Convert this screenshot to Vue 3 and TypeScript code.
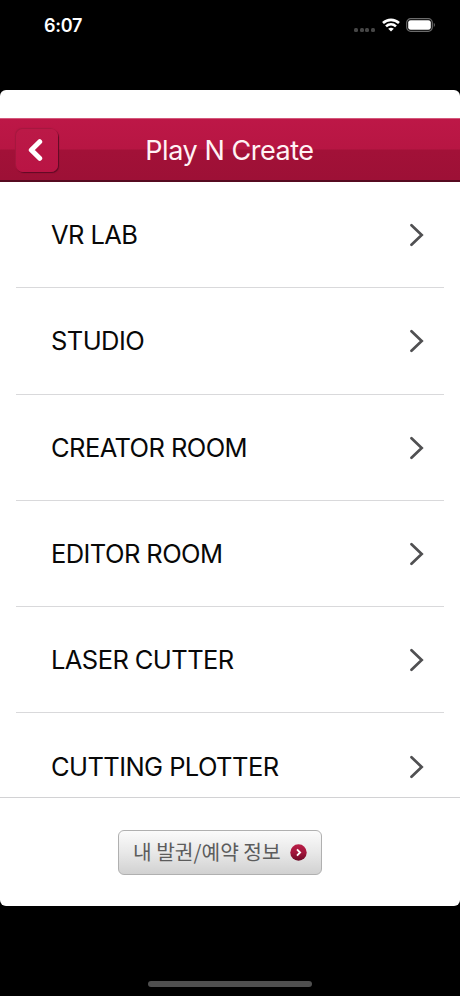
<script setup lang="ts">
interface Room {
  name: string
}

const rooms: Room[] = [
  { name: 'VR LAB' },
  { name: 'STUDIO' },
  { name: 'CREATOR ROOM' },
  { name: 'EDITOR ROOM' },
  { name: 'LASER CUTTER' },
  { name: 'CUTTING PLOTTER' },
]
</script>

<template>
  <div class="phone">
    <div class="status">
      <span class="time">6:07</span>
      <div class="indicators">
        <div class="cell"><i v-for="n in 4" :key="n"></i></div>
        <svg class="wifi" width="18" height="14" viewBox="0 0 18 14" fill="none" stroke="#fff" stroke-width="2.6">
          <path d="M1 5C5.500.8 12.500.8 17 5" />
          <path d="M4 8.400c2.900-2.700 7.100-2.700 10 0" />
          <path d="M9 13.600 6.200 10.800q2.800-2.200 5.600 0z" fill="#fff" stroke="none" />
        </svg>
        <svg class="battery" width="30" height="14" viewBox="0 0 30 14">
          <rect x=".7" y=".7" width="25.600" height="12.600" rx="4" fill="none" stroke="#6b6b6b" stroke-width="1.200" />
          <rect x="2.200" y="2.200" width="22.600" height="9.600" rx="2.400" fill="#fff" />
          <path d="M27.800 4.800q2.200 2.200 0 4.400z" fill="#6b6b6b" />
        </svg>
      </div>
    </div>

    <main class="sheet">
      <header class="bar">
        <button class="back" aria-label="Back">
          <svg width="16" height="24" viewBox="0 0 16 24" fill="none" stroke="#fff" stroke-width="5">
            <path d="M12.700 3.700 4.300 12l8.400 8.300" stroke-linecap="round" stroke-linejoin="round" />
          </svg>
        </button>
        <h1>Play N Create</h1>
      </header>

      <ul class="list">
        <li v-for="room in rooms" :key="room.name">
          <span>{{ room.name }}</span>
          <svg width="14" height="24" viewBox="0 0 14 24" fill="none" stroke="#505052" stroke-width="2.700">
            <path d="M1.500 2.200 11.700 12 1.500 21.800" stroke-linecap="round" />
          </svg>
        </li>
      </ul>

      <footer class="footer">
        <button class="info">
          <span>내 발권/예약 정보</span>
          <svg width="17" height="17" viewBox="0 0 17 17">
            <defs>
              <linearGradient id="badge" x1="0" y1="0" x2="0" y2="1">
                <stop offset="0" stop-color="#b91f47" />
                <stop offset=".5" stop-color="#a3153c" />
                <stop offset="1" stop-color="#6c0a26" />
              </linearGradient>
            </defs>
            <circle cx="8.500" cy="8.500" r="8.200" fill="url(#badge)" />
            <path d="m7 5.400 3.100 3.100L7 11.600" fill="none" stroke="#fff" stroke-width="1.900" />
          </svg>
        </button>
      </footer>
    </main>

    <div class="home"><i></i></div>
  </div>
</template>

<style>
body {
  background: #000;
}
</style>

<style scoped>
.phone {
  width: 460px;
  height: 996px;
  overflow: hidden;
  background: #000;
  display: flex;
  flex-direction: column;
  font-family: Inter, 'Noto Sans CJK KR', sans-serif;
}
.status {
  height: 90px;
  flex: none;
  display: flex;
  justify-content: space-between;
  align-items: flex-start;
  padding: 15px 24px 0 44px;
  box-sizing: border-box;
}
.time {
  color: #fff;
  font-size: 18px;
  line-height: 22px;
  font-weight: 600;
  letter-spacing: -0.3px;
}
.indicators {
  display: flex;
  align-items: center;
  padding-top: 3px;
}
.cell {
  display: flex;
  gap: 1.6px;
  margin: 9px 7px 0 0;
}
.cell i {
  width: 4px;
  height: 4px;
  border-radius: 1.5px;
  background: #464646;
}
.wifi {
  margin-right: 6px;
}
.sheet {
  height: 816px;
  flex: none;
  box-sizing: border-box;
  padding-top: 28px;
  border-radius: 6px;
  background: #fff;
  overflow: hidden;
  display: flex;
  flex-direction: column;
}
.bar {
  height: 64px;
  flex: none;
  box-sizing: border-box;
  display: grid;
  grid-template-columns: 60px 1fr 61px;
  align-items: center;
  border-top: 1px solid #d4577b;
  border-bottom: 2px solid #560a20;
  background: linear-gradient(#bd1747 0, #b71643 30px, #a21138 31px, #9d1036 100%);
}
.back {
  width: 42px;
  height: 43px;
  margin: 1px 0 0 16px;
  padding: 0 4px 0 0;
  border: 0;
  border-radius: 7px;
  background: linear-gradient(#bb1947, #b91444);
  box-shadow: 1px 1px 1px #5f0a24, -1px -1px 1px #a5183f;
  display: flex;
  align-items: center;
  justify-content: center;
}
h1 {
  margin: 2px 0 0;
  color: #fff2f5;
  font-size: 27px;
  line-height: 32px;
  font-weight: 400;
  text-align: center;
  letter-spacing: -0.45px;
}
.list {
  height: 615px;
  flex: none;
  box-sizing: border-box;
  overflow: hidden;
  margin: 0;
  padding: 0 16px;
  list-style: none;
}
li {
  height: 106.3px;
  box-sizing: border-box;
  padding: 1px 20px 0 35px;
  border-bottom: 1.5px solid #d9d9db;
  display: flex;
  align-items: center;
  justify-content: space-between;
}
li span {
  color: #080808;
  font-size: 25.5px;
  line-height: 32px;
  letter-spacing: -0.58px;
}
.footer {
  flex: 1;
  border-top: 1px solid #d2d2d4;
  display: flex;
  align-items: flex-start;
  justify-content: center;
  padding-right: 20px;
  padding-top: 32px;
}
.info {
  width: 204px;
  height: 45px;
  box-sizing: border-box;
  padding: 0 14px;
  border: 1px solid #b0b0b0;
  border-radius: 6px;
  background: linear-gradient(#fbfbfb, #e8e8e8 50%, #d1d1d1);
  display: flex;
  align-items: center;
  justify-content: space-between;
  color: #5c5c5c;
  font-family: 'Noto Sans CJK KR', sans-serif;
  font-size: 20.3px;
  line-height: 28px;
  white-space: nowrap;
}
.info span {
  margin-top: -4px;
}
.home {
  flex: 1;
  display: flex;
  align-items: flex-end;
  justify-content: center;
  padding-bottom: 9px;
}
.home i {
  width: 164px;
  height: 6px;
  border-radius: 3px;
  background: #4f4f4f;
}
</style>
